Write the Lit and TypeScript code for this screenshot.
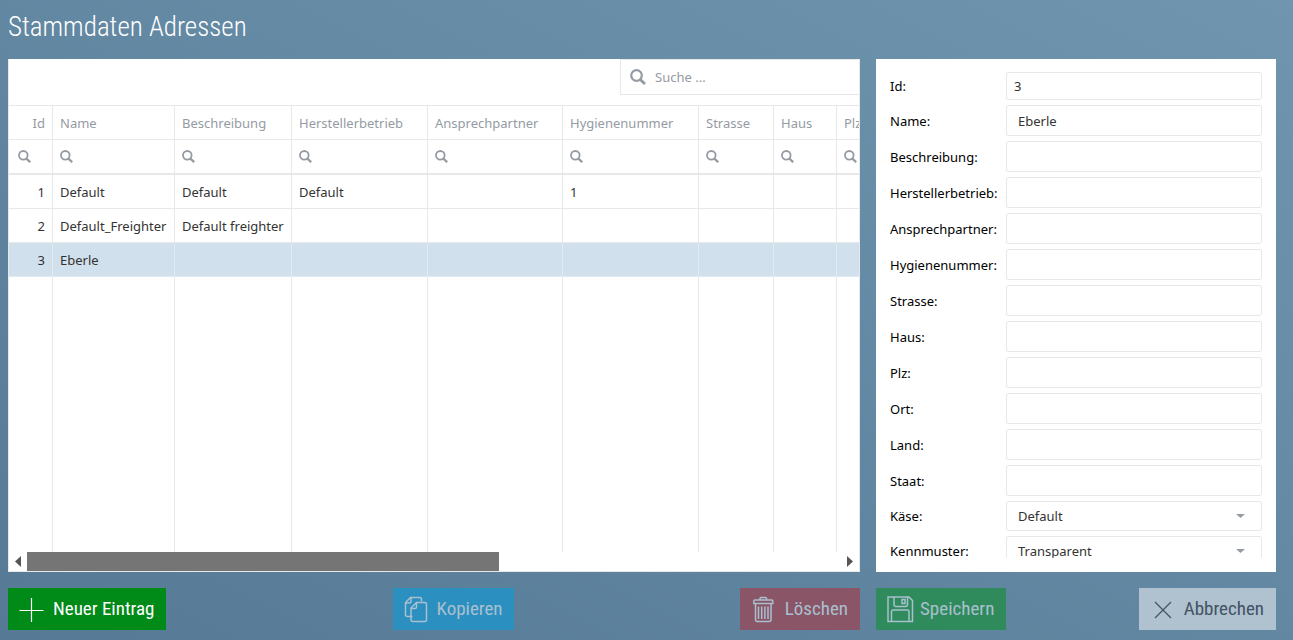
import { LitElement, html, css, svg, nothing } from "lit";
import { customElement, state } from "lit/decorators.js";
import { classMap } from "lit/directives/class-map.js";

interface Column {
  key: string;
  label: string;
  size: string;
}

type Row = Record<string, string>;

const COLUMNS: Column[] = [
  { key: "id", label: "Id", size: "c-id" },
  { key: "name", label: "Name", size: "c-name" },
  { key: "desc", label: "Beschreibung", size: "c-desc" },
  { key: "maker", label: "Herstellerbetrieb", size: "c-wide" },
  { key: "contact", label: "Ansprechpartner", size: "c-contact" },
  { key: "hygiene", label: "Hygienenummer", size: "c-wide" },
  { key: "street", label: "Strasse", size: "c-street" },
  { key: "house", label: "Haus", size: "c-house" },
  { key: "zip", label: "Plz", size: "c-zip" },
];

const ROWS: Row[] = [
  { id: "1", name: "Default", desc: "Default", maker: "Default", hygiene: "1" },
  { id: "2", name: "Default_Freighter", desc: "Default freighter" },
  { id: "3", name: "Eberle" },
];

const FIELDS: Column[] = [
  ...COLUMNS.slice(1),
  { key: "city", label: "Ort", size: "" },
  { key: "country", label: "Land", size: "" },
  { key: "state", label: "Staat", size: "" },
];

const magnifier = svg`<circle cx="5.3" cy="5.3" r="4.300" fill="none" stroke="currentColor" stroke-width="1.8"/>
  <path d="M8.300 8.500L12.200 12.200" fill="none" stroke="currentColor" stroke-width="2.3"/>`;

const icons = {
  plus: svg`<path d="M12.500 2v24M.5 14.500h24"/>`,
  copy: svg`<path d="M8.500 20.500H3.200Q1.500 20.500 1.500 18.800V6.500L6.500 1.500H15.800Q17.500 1.500 17.500 3.200V5.500M1.500 7H5.500Q7 7 7 5.500V1.500"/>
    <path d="M12.500 6.500H20.800Q22.500 6.500 22.500 8.200V24Q22.500 25.500 20.800 25.500H8.800Q7 25.500 7 24V12ZM7 12.500H11Q12.500 12.500 12.500 11V6.500"/>`,
  trash: svg`<path d="M2.500 7.500V23.500Q2.500 25.500 4.500 25.500H16Q18 25.500 18 23.500V7.500"/>
    <path d="M1.800 4H18.800Q19.800 4 19.800 5V7.500H.8V5Q.8 4 1.800 4ZM7 4V2.500Q7 1.500 8 1.500H12.500Q13.500 1.500 13.500 2.500V4"/>
    <path d="M5.500 10.500V23M8.700 10.500V23M11.900 10.500V23M15 10.500V23"/>`,
  save: svg`<path d="M1 1H22L25.500 4.500V25.500H1Z"/>
    <path d="M7 1V8.500Q7 10.500 9 10.500H18.500Q20.500 10.500 20.500 8.500V1M15 3.500H18V7.500H15Z"/>
    <path d="M4.500 25V15.500Q4.500 14 6 14H20.500Q22 14 22 15.500V25"/>`,
  cross: svg`<path d="M1 3L17 19M17 3L1 19"/>`,
};

@customElement("app-root")
export class AppRoot extends LitElement {
  @state() private selected = 2;

  static styles = css`
    :host {
      display: block;
      --line: #e8e8e8;
      --muted: #959ba3;
      --text: #333;
      font: 13px/20px "Noto Sans", sans-serif;
      color: #000;
    }
    * {
      box-sizing: border-box;
    }
    .page {
      display: flex;
      flex-direction: column;
      height: 100vh;
      padding: 0 17px 10px 8px;
      background: linear-gradient(to top right, #567a95, #6f95af);
    }
    h1 {
      margin: 0;
      padding-top: 11px;
      height: 59px;
      color: #fff;
      font: 300 27px/32px "Roboto Condensed", "Liberation Sans Narrow", Roboto, sans-serif;
    }
    .panels {
      flex: 1;
      min-height: 0;
      display: flex;
      gap: 16px;
    }
    .grid {
      flex: 1;
      min-width: 0;
      display: flex;
      flex-direction: column;
      background: #fff;
      border: 1px solid var(--line);
      border-top: 0;
    }
    .toolbar {
      display: flex;
      justify-content: flex-end;
      height: 46px;
    }
    .search {
      display: flex;
      align-items: center;
      gap: 6px;
      width: 239px;
      height: 36px;
      padding-left: 9px;
      border: 1px solid var(--line);
      border-right: 0;
      color: var(--muted);
    }
    .search svg {
      width: 16px;
      height: 16px;
      margin-right: 1px;
    }
    input,
    select {
      font: inherit;
      border: 0;
      outline: 0;
      background: none;
      color: var(--text);
    }
    .search input {
      flex: 1;
      min-width: 0;
    }
    input::placeholder {
      color: var(--muted);
      opacity: 1;
    }
    .scroller {
      flex: 1;
      min-height: 0;
      overflow: hidden;
    }
    table {
      table-layout: fixed;
      width: 1000px;
      height: 100%;
      border-collapse: separate;
      border-spacing: 0;
      border-top: 1px solid var(--line);
    }
    .c-id { width: 44px; }
    .c-name { width: 122px; }
    .c-desc { width: 117px; }
    .c-wide { width: 136px; }
    .c-contact { width: 135px; }
    .c-street { width: 75px; }
    .c-house { width: 63px; }
    th,
    td {
      height: 34px;
      padding: 0 7px;
      text-align: left;
      font-weight: 400;
      white-space: nowrap;
      border-right: 1px solid var(--line);
      border-bottom: 1px solid var(--line);
      color: var(--text);
    }
    th {
      color: var(--muted);
    }
    .num {
      text-align: right;
    }
    .filter td {
      height: 35px;
      border-bottom-width: 2px;
      color: var(--muted);
    }
    .filter td:first-child {
      padding-left: 9px;
    }
    .filter label {
      display: flex;
      align-items: center;
      gap: 6px;
    }
    .filter input {
      flex: 1;
      width: 0;
      min-width: 0;
      padding: 0;
    }
    .filter svg {
      flex: none;
      width: 13px;
      height: 13px;
    }
    .picked td {
      background: #d0e0ec;
      border-right-color: #dfeaf2;
      border-bottom-color: #dfeaf2;
    }
    .filler td {
      height: auto;
      border-bottom: 0;
    }
    .bar {
      display: flex;
      height: 19px;
    }
    .arrow {
      width: 18px;
      padding: 0;
      border: 0;
      background: none;
      color: #555;
      display: grid;
      place-items: center;
    }
    .arrow svg {
      width: 6px;
      height: 11px;
      fill: currentColor;
    }
    .track {
      flex: 1;
    }
    .thumb {
      width: 58%;
      height: 100%;
      background: #757575;
    }
    .details {
      width: 400px;
      padding: 13px 14px 14px;
      background: #fff;
    }
    .fields {
      height: 100%;
      overflow: hidden;
      display: flex;
      flex-direction: column;
      gap: 5px;
    }
    .field {
      flex: none;
      display: flex;
      align-items: center;
      height: 31px;
    }
    .field label {
      width: 116px;
    }
    .field input,
    .field select {
      flex: 1;
      min-width: 0;
      height: 100%;
      padding: 0 11px;
      border: 1px solid var(--line);
      border-radius: 2px;
    }
    .field.key {
      height: 28px;
    }
    .field.key input {
      padding: 0 7px;
    }
    .field.choice {
      height: 30px;
    }
    .field select {
      appearance: none;
      background: url('data:image/svg+xml,<svg xmlns="http://www.w3.org/2000/svg" width="9" height="4"><path d="M0 0h9L4.500 4z" fill="%23959ba3"/></svg>')
        no-repeat right 16px center;
    }
    .actions {
      display: flex;
      gap: 16px;
      padding-top: 16px;
    }
    .left {
      flex: 1;
    }
    .right {
      width: 400px;
    }
    .left,
    .right {
      display: flex;
      justify-content: space-between;
    }
    .btn {
      display: flex;
      align-items: center;
      gap: 8px;
      height: 42px;
      padding: 0 12px 0 11px;
      border: 0;
      color: #fff;
      font: 400 19px/24px "Roboto Condensed", "Liberation Sans Narrow", Roboto, sans-serif;
    }
    .btn svg {
      fill: none;
      stroke: currentColor;
      stroke-width: 1.5;
    }
    .btn:disabled {
      color: #a9c0cf;
    }
    .btn.new { background: #008a17; }
    .btn.copy { background: #2b8fc0; padding-right: 11px; gap: 9px; }
    .btn.trash { background: #8a5566; padding-left: 13px; gap: 11px; }
    .btn.save { background: #2f8a5c; gap: 6px; }
    .btn.cross { background: #b0c2cf; color: #415364; padding-left: 15px; gap: 12px; }
    .btn.new svg,
    .btn.cross svg { stroke-width: 1.2; }
  `;

  private button(kind: keyof typeof icons, tone: string, label: string, w: number, h: number, off = true) {
    return html`<button class="btn ${tone}" ?disabled=${off}>
      <svg width=${w} height=${h} viewBox="0 0 ${w} ${h}" aria-hidden="true">${icons[kind]}</svg>${label}
    </button>`;
  }

  private choice(id: string, label: string, value: string) {
    return html`<div class="field choice">
      <label for=${id}>${label}:</label>
      <select id=${id}><option>${value}</option></select>
    </div>`;
  }

  render() {
    const row = ROWS[this.selected];
    return html`<main class="page">
      <h1>Stammdaten Adressen</h1>
      <div class="panels">
        <section class="grid">
          <div class="toolbar">
            <label class="search">
              <svg viewBox="0 0 13 13" aria-hidden="true">${magnifier}</svg>
              <input type="text" placeholder="Suche ..." aria-label="Suche" />
            </label>
          </div>
          <div class="scroller">
            <table>
              <colgroup>${COLUMNS.map((c) => html`<col class=${c.size} />`)}</colgroup>
              <thead>
                <tr>${COLUMNS.map((c) => html`<th class=${c.key === "id" ? "num" : nothing}>${c.label}</th>`)}</tr>
                <tr class="filter">
                  ${COLUMNS.map(
                    (c) => html`<td><label>
                      <svg viewBox="0 0 13 13" aria-hidden="true">${magnifier}</svg>
                      <input type="text" aria-label=${c.label} />
                    </label></td>`
                  )}
                </tr>
              </thead>
              <tbody>
                ${ROWS.map(
                  (r, i) => html`<tr class=${classMap({ picked: i === this.selected })} @click=${() => (this.selected = i)}>
                    ${COLUMNS.map((c) => html`<td class=${c.key === "id" ? "num" : nothing}>${r[c.key] ?? ""}</td>`)}
                  </tr>`
                )}
                <tr class="filler">${COLUMNS.map(() => html`<td></td>`)}</tr>
              </tbody>
            </table>
          </div>
          <div class="bar">
            <button class="arrow" aria-label="Links"><svg viewBox="0 0 6 11"><path d="M6 0v11L0 5.500z"/></svg></button>
            <div class="track"><div class="thumb"></div></div>
            <button class="arrow" aria-label="Rechts"><svg viewBox="0 0 6 11"><path d="M0 0v11l6-5.500z"/></svg></button>
          </div>
        </section>
        <section class="details">
          <form class="fields">
            <div class="field key">
              <label for="id">Id:</label>
              <input id="id" type="text" readonly .value=${row.id} />
            </div>
            ${FIELDS.map(
              (f) => html`<div class="field">
                <label for=${f.key}>${f.label}:</label>
                <input id=${f.key} type="text" .value=${row[f.key] ?? ""} />
              </div>`
            )}
            ${this.choice("cheese", "Käse", "Default")} ${this.choice("pattern", "Kennmuster", "Transparent")}
          </form>
        </section>
      </div>
      <div class="actions">
        <div class="left">
          ${this.button("plus", "new", "Neuer Eintrag", 26, 26, false)}
          ${this.button("copy", "copy", "Kopieren", 24, 27)}
          ${this.button("trash", "trash", "Löschen", 21, 27)}
        </div>
        <div class="right">
          ${this.button("save", "save", "Speichern", 27, 27)}
          ${this.button("cross", "cross", "Abbrechen", 18, 20)}
        </div>
      </div>
    </main>`;
  }
}
